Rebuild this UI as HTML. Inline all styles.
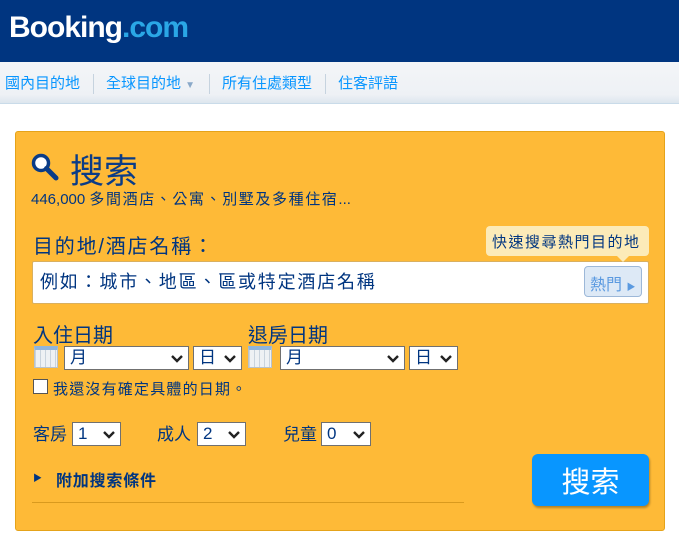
<!DOCTYPE html>
<html><head><meta charset="utf-8"><style>
*{margin:0;padding:0;box-sizing:border-box}
body{width:679px;height:544px;background:#fff;font-family:"Liberation Sans","Noto Sans CJK TC",sans-serif;position:relative;overflow:hidden;color:#003580}
.a{position:absolute;white-space:nowrap}
.hdr{left:0;top:0;width:679px;height:62px;background:#003580}
.logo{left:9px;top:11px;font-size:30px;font-weight:bold;color:#fff;letter-spacing:-1px}
.logo span{color:#2aa7e6}
.nav{left:0;top:62px;width:679px;height:42px;background:linear-gradient(#f3f5f8,#eef1f5 80%,#dde6ee);border-bottom:1px solid #c9dbe9}
.nav div{position:absolute;top:10px;font-size:15px;color:#0896ff}
.sep{position:absolute;top:12px;width:1px;height:20px;background:#c6d3df}
.panel{left:15px;top:131px;width:650px;height:400px;background:#feba37;border:1px solid #e5a31a;border-radius:3px}
.sel{position:absolute;height:24px;background:#fff;border:1px solid #707070;font-size:17px;line-height:22px;color:#003580;padding:0 0 0 5px}
.sel svg{position:absolute;right:5px;top:8px}
.cal{position:absolute;width:24px;height:22px;background:repeating-linear-gradient(90deg,#c9d3dd 0 1px,#eef1f4 1px 5px),#eee;border:1px solid #b8c2cc;border-top:4px solid #8fb5dd}
</style></head><body>
<div class="a hdr"></div>
<div class="a logo">Booking<span>.com</span></div>
<div class="a nav">
<div style="left:5px">國內目的地</div><i class="sep" style="left:93px"></i>
<div style="left:106px">全球目的地 <span style="font-size:10px;color:#8aa9c9">▼</span></div><i class="sep" style="left:209px"></i>
<div style="left:222px">所有住處類型</div><i class="sep" style="left:325px"></i>
<div style="left:338px">住客評語</div>
</div>
<div class="a panel"></div>
<svg class="a" style="left:31px;top:153px" width="28" height="28" viewBox="0 0 28 28"><circle cx="10" cy="10" r="7.5" fill="#fff" stroke="#0a3c87" stroke-width="3.5"/><path d="M15.5 15.5L25 25" stroke="#0a3c87" stroke-width="5" stroke-linecap="round"/></svg>
<div class="a" style="left:70px;top:144px;font-size:34px;color:#0a3c87">搜索</div>
<div class="a" style="left:31px;top:188px;font-size:15px">446,000 <span style="letter-spacing:1.6px">多間酒店、公寓、別墅及多種住宿</span>...</div>
<div class="a" style="left:33px;top:230px;font-size:20px;letter-spacing:1.8px">目的地/酒店名稱：</div>
<div class="a" style="left:32px;top:261px;width:617px;height:43px;background:#fff;border:1px solid #d9b060;border-radius:2px"></div>
<div class="a" style="left:40px;top:268px;font-size:18px;letter-spacing:1.8px">例如：城市、地區、區或特定酒店名稱</div>
<div class="a" style="left:486px;top:226px;width:163px;height:30px;background:#fcebb8;border-radius:4px;font-size:15px;letter-spacing:1.5px;padding:5px 0 0 6px;color:#003580">快速搜尋熱門目的地</div>
<div class="a" style="left:617px;top:256px;width:0;height:0;border-left:6px solid transparent;border-right:6px solid transparent;border-top:6px solid #fcebb8"></div>
<div class="a" style="left:584px;top:266px;width:58px;height:31px;background:#dde9f6;border:1px solid #9db8d8;border-radius:4px;font-size:16px;color:#5b9ae0;padding:4px 0 0 5px">熱門 <span style="font-size:9px">▶</span></div>
<div class="a" style="left:33px;top:319px;font-size:20px">入住日期</div>
<div class="a" style="left:248px;top:319px;font-size:20px">退房日期</div>
<i class="cal" style="left:34px;top:346px"></i>
<i class="cal" style="left:248px;top:346px"></i>
<div class="sel" style="left:64px;top:346px;width:125px">月<svg width="12" height="8"><path d="M1 1l5 5 5-5" stroke="#222" stroke-width="2.4" fill="none"/></svg></div>
<div class="sel" style="left:193px;top:346px;width:49px">日<svg width="12" height="8"><path d="M1 1l5 5 5-5" stroke="#222" stroke-width="2.4" fill="none"/></svg></div>
<div class="sel" style="left:280px;top:346px;width:125px">月<svg width="12" height="8"><path d="M1 1l5 5 5-5" stroke="#222" stroke-width="2.4" fill="none"/></svg></div>
<div class="sel" style="left:409px;top:346px;width:49px">日<svg width="12" height="8"><path d="M1 1l5 5 5-5" stroke="#222" stroke-width="2.4" fill="none"/></svg></div>
<div class="a" style="left:33px;top:379px;width:15px;height:15px;background:#fff;border:1px solid #555"></div>
<div class="a" style="left:53px;top:378px;font-size:15px;letter-spacing:1.2px">我還沒有確定具體的日期。</div>
<div class="a" style="left:33px;top:420px;font-size:17px">客房</div>
<div class="a" style="left:157px;top:420px;font-size:17px">成人</div>
<div class="a" style="left:283px;top:420px;font-size:17px">兒童</div>
<div class="sel" style="left:72px;top:422px;width:49px">1<svg width="12" height="8"><path d="M1 1l5 5 5-5" stroke="#222" stroke-width="2.4" fill="none"/></svg></div>
<div class="sel" style="left:197px;top:422px;width:49px">2<svg width="12" height="8"><path d="M1 1l5 5 5-5" stroke="#222" stroke-width="2.4" fill="none"/></svg></div>
<div class="sel" style="left:321px;top:422px;width:50px">0<svg width="12" height="8"><path d="M1 1l5 5 5-5" stroke="#222" stroke-width="2.4" fill="none"/></svg></div>
<div class="a" style="left:33px;top:471px;font-size:9px">▶</div>
<div class="a" style="left:56px;top:467px;font-size:16px;letter-spacing:0.8px;font-weight:bold">附加搜索條件</div>
<div class="a" style="left:32px;top:502px;width:432px;height:1px;background:#d99a1e"></div>
<div class="a" style="left:532px;top:454px;width:117px;height:52px;background:#0896ff;border-radius:6px;box-shadow:1px 2px 2px rgba(0,0,0,.3);color:#fff;font-size:29px;text-align:center;padding-top:5px">搜索</div>
</body></html>
